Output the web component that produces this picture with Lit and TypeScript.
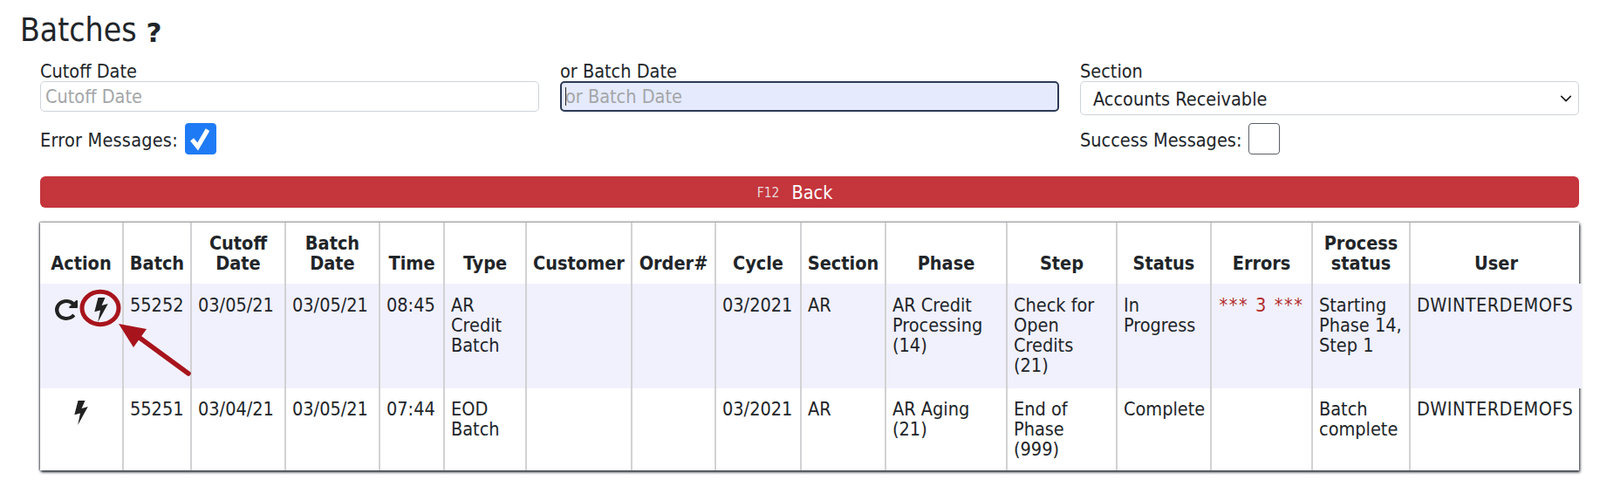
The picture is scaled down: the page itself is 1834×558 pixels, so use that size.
import { LitElement, html, css, svg } from "lit";
import { customElement } from "lit/decorators.js";

const bolt = html`<svg class="bolt" viewBox="0 0 16 28"><path d="M4.5 0H12.5L8.6 9 15.8 7 4.2 28 7 14.5 0.3 16.2z" fill="currentColor"/></svg>`;
const redo = html`<svg class="redo" viewBox="128 128 1536 1536" preserveAspectRatio="none"><path fill="currentColor" d="M1664 256v448q0 26-19 45t-45 19h-448q-42 0-59-40-17-39 14-69l138-138q-148-137-349-137-104 0-198.5 40.5t-163.5 109.5-109.5 163.5-40.5 198.5 40.5 198.5 109.5 163.5 163.5 109.5 198.5 40.5q119 0 225-52t179-147q7-10 23-12 15 0 25 9l137 138q9 8 9.5 20.5t-7.5 22.5q-109 132-264 204.5t-327 72.5q-156 0-298-61t-245-164-164-245-61-298 61-298 164-245 245-164 298-61q147 0 284.5 55.5t244.5 156.5l130-129q29-31 70-14 39 17 39 59z"/></svg>`;

const headers = ["Action","Batch","Cutoff Date","Batch Date","Time","Type","Customer","Order#","Cycle","Section","Phase","Step","Status","Errors","Process status","User"];
const rows = [
  { icons: html`${redo}${bolt}`, cells: ["55252","03/05/21","03/05/21","08:45","AR Credit Batch","","","03/2021","AR","AR Credit Processing (14)","Check for Open Credits (21)","In Progress","*** 3 ***","Starting Phase 14, Step 1","DWINTERDEMOFS"] },
  { icons: bolt, cells: ["55251","03/04/21","03/05/21","07:44","EOD Batch","","","03/2021","AR","AR Aging (21)","End of Phase (999)","Complete","","Batch complete","DWINTERDEMOFS"] },
];
const widths = [95,78,108,108,74,94,121,96,98,97,139,126,108,116,112,197];

@customElement("app-root")
export class AppRoot extends LitElement {
  static styles = css`
    :host { display: block; position: relative; width: 1834px; height: 558px; background: #fff; overflow: hidden;
      font-family: "DejaVu Sans Condensed", "DejaVu Sans", sans-serif; font-size: 21.5px; line-height: 23px; color: #212529; }
    .title { height: 70px; padding-left: 23px; display: flex; align-items: center; gap: 11px; box-sizing: border-box; }
    h1 { margin: 0; font-size: 37px; font-weight: 400; line-height: 40px; }
    .help { font-family: "DejaVu Sans", sans-serif; font-size: 31px; font-weight: 700; line-height: 40px; margin-top: 4px; }
    .main { padding: 0 24px 0 46px; }
    .filters { display: grid; grid-template-columns: repeat(3, 1fr); column-gap: 24px; }
    label { display: block; }
    input.text, select { display: block; width: 100%; box-sizing: border-box; font: inherit; border-radius: 5px; outline: none; }
    input.text { height: 35px; padding: 0 5px; border: 1px solid #ced4da; background: #fff; }
    input.text::placeholder { color: #a4a6a8; opacity: 1; }
    input.focus { border: 2px solid #2c3a55; background: #e5eafd; padding: 0 4px; }
    .caretwrap { position: relative; }
    .caret { position: absolute; left: 6px; top: 7px; width: 1px; height: 21px; background: #222; }
    select { height: 39px; padding: 2px 14px 0; border: 1px solid #ced4da; background: #fff url("data:image/svg+xml,%3Csvg xmlns='http://www.w3.org/2000/svg' viewBox='0 0 16 16'%3E%3Cpath fill='none' stroke='%23222' stroke-width='2' stroke-linecap='round' stroke-linejoin='round' d='M2 5l6 6 6-6'/%3E%3C/svg%3E") no-repeat right 7px center / 14px 14px; appearance: none; color: #212529; }
    .check { display: flex; align-items: center; gap: 8px; height: 36px; margin-top: 9px; }
    .check span { padding-top: 2px; }
    .check.wide span { letter-spacing: .22px; }
    input.box { appearance: none; margin: 0; width: 36px; height: 36px; border: 1px solid #5a5f66; border-radius: 4px; background: #fff; }
    input.box:checked { border-color: #1f7bf5; background: #1f7bf5 url("data:image/svg+xml,%3Csvg xmlns='http://www.w3.org/2000/svg' viewBox='0 0 36 36'%3E%3Cpath fill='none' stroke='%23fff' stroke-width='5.5' d='M7.5 19l7 8.5L26.5 7'/%3E%3C/svg%3E") center / 100% 100% no-repeat; }
    .back { display: flex; align-items: center; justify-content: center; gap: 14px; height: 36px; margin-top: 25px; padding-right: 34px; background: #c4353c; color: #fff; border-radius: 6px; font-size: 21.5px; }
    .back small { font-size: 15.5px; color: #e8d5d6; padding-top: 3px; }
    .tablewrap { margin-top: 17px; width: 1764px; box-shadow: 1px 2px 3px rgba(20,25,35,.95), -1px 0 2px rgba(50,55,65,.7), 0 -1px 2px rgba(120,120,120,.5); }
    table { border-collapse: collapse; table-layout: fixed; width: 1764px; }
    th { font-weight: 700; text-align: center; vertical-align: bottom; padding: 12px 2px; height: 70px; box-sizing: border-box; }
    td { vertical-align: top; padding: 13px 4px 13px 7px; text-align: left; }
    tr.plain td { padding-top: 12px; padding-bottom: 12px; }
    th, td { border-left: 2px solid #d2d2d4; }
    th:first-child, td:first-child { border-left: none; }
    tbody tr.alt { background: #f1f1fe; height: 120px; }
    tbody tr.plain { height: 94px; }
    td.action { text-align: center; padding-left: 0; padding-right: 0; }
    .icons { display: flex; justify-content: center; align-items: flex-start; gap: 19px; }
    svg.bolt { width: 16px; height: 28px; color: #222; display: block; flex: none; margin-top: 2px; }
    .icons svg.redo + svg.bolt { margin-top: 3px; }
    svg.redo { width: 26px; height: 24px; color: #222; display: block; flex: none; margin-top: 5px; }
    td.err { color: #b22a2a; text-align: center; padding-left: 2px; padding-right: 2px; letter-spacing: 1.6px; white-space: nowrap; }
    td:last-child { letter-spacing: .42px; }
    .mark { position: absolute; left: 0; top: 0; width: 1834px; height: 558px; pointer-events: none; }
  `;

  render() {
    return html`
      <div class="title"><h1>Batches</h1><span class="help">?</span></div>
      <div class="main">
        <div class="filters">
          <div>
            <label>Cutoff Date</label>
            <input class="text" placeholder="Cutoff Date" />
          </div>
          <div>
            <label>or Batch Date</label>
            <div class="caretwrap"><input class="text focus" placeholder="or Batch Date" /><span class="caret"></span></div>
          </div>
          <div>
            <label>Section</label>
            <select><option>Accounts Receivable</option></select>
          </div>
          <div class="check wide"><span>Error Messages:</span><input class="box" type="checkbox" checked /></div>
          <div></div>
          <div class="check"><span>Success Messages:</span><input class="box" type="checkbox" /></div>
        </div>
        <div class="back"><small>F12</small><span>Back</span></div>
        <div class="tablewrap">
          <table>
            <colgroup>${widths.map((w) => html`<col style="width:${w}px" />`)}</colgroup>
            <thead><tr>${headers.map((h) => html`<th>${h}</th>`)}</tr></thead>
            <tbody>
              ${rows.map((r, i) => html`<tr class=${i === 0 ? "alt" : "plain"}>
                <td class="action"><div class="icons">${r.icons}</div></td>
                ${r.cells.map((c, j) => html`<td class=${j === 12 ? "err" : ""}>${c}</td>`)}
              </tr>`)}
            </tbody>
          </table>
        </div>
      </div>
      <svg class="mark" viewBox="0 0 1834 558">
        ${svg`<ellipse cx="115" cy="353" rx="21" ry="18.7" fill="none" stroke="#a8141c" stroke-width="5"/>
        <path d="M216 428L160 387" stroke="#a8141c" stroke-width="5.5" stroke-linecap="round" fill="none"/>
        <path d="M136 371L168 377L153 398Z" fill="#a8141c"/>`}
      </svg>
    `;
  }
}
